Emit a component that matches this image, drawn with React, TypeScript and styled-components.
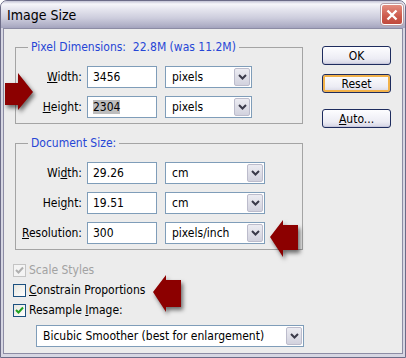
import styled, { createGlobalStyle } from 'styled-components';

const GlobalStyle = createGlobalStyle`
  html, body {
    margin: 0;
    padding: 0;
    background: #ffffff;
  }
  body {
    font-family: "DejaVu Sans Condensed", "DejaVu Sans", sans-serif;
    font-size: 12px;
    color: #000;
  }
`;

const Page = styled.div`
  position: relative;
  width: 406px;
  height: 358px;
`;

const Window = styled.div`
  width: 406px;
  height: 358px;
  box-sizing: border-box;
  border: 1px solid #6c6c88;
  border-radius: 7px 7px 0 0;
  background: #d6d6e2;
  display: flex;
  flex-direction: column;
  overflow: hidden;
`;

const TitleBar = styled.div`
  flex: none;
  height: 27px;
  display: flex;
  align-items: center;
  justify-content: space-between;
  padding: 0 2px 0 6px;
  background: linear-gradient(
    #c4c4d6 0,
    #f6f6fa 3px,
    #e6e6ef 8px,
    #cdcddd 17px,
    #b2b2c8 24px,
    #a4a4be 27px
  );
`;

const Title = styled.span`
  font-size: 14px;
  color: #000;
  padding-top: 1px;
`;

const CloseButton = styled.div`
  width: 22px;
  height: 21px;
  box-sizing: border-box;
  border: 1px solid #fff;
  border-radius: 3px;
  box-shadow: 0 0 0 1px #b8a0a8;
  background: linear-gradient(#e48e80, #cc5a4c 60%, #c04a3e);
  display: flex;
  align-items: center;
  justify-content: center;
`;

const Frame = styled.div`
  flex: 1;
  display: flex;
  padding: 0 2px 3px;
  min-height: 0;
`;

const Client = styled.div`
  flex: 1;
  display: flex;
  align-items: flex-start;
  border: 1px solid #8c8ca4;
  background: #ececec;
  padding: 11px 11px 0 9px;
  gap: 18px;
`;

const LeftColumn = styled.div`
  width: 291px;
  display: flex;
  flex-direction: column;
`;

const Group = styled.fieldset<{ $top?: number }>`
  margin: ${(p) => p.$top ?? 0}px 0 0 2px;
  width: 288px;
  box-sizing: border-box;
  padding: 11px 0 5px 0;
  border: 1px solid #a4a4a4;
  min-width: 0;
`;

const Legend = styled.legend`
  margin-left: 12px;
  padding: 0 3px;
  color: #2646d6;
  font-size: 12px;
  line-height: 15px;
`;

const FieldGrid = styled.div`
  display: grid;
  grid-template-columns: 71px 70px auto;
  row-gap: 8px;
  align-items: center;
`;

const Label = styled.label`
  text-align: right;
  padding-right: 5px;
`;

const TextBox = styled.div`
  height: 22px;
  box-sizing: border-box;
  border: 1px solid #7f9db9;
  background: #fff;
  padding: 0 5px;
  display: flex;
  align-items: center;
`;

const Selected = styled.span`
  background: #bdbdbd;
`;

const Select = styled.div<{ $width: number; $left?: number }>`
  width: ${(p) => p.$width}px;
  margin-left: ${(p) => p.$left ?? 8}px;
  height: 22px;
  box-sizing: border-box;
  border: 1px solid #7f9db9;
  background: #fff;
  padding: 1px 1px 1px 6px;
  display: flex;
  align-items: center;
  justify-content: space-between;
`;

const DropButton = styled.div`
  width: 16px;
  height: 18px;
  box-sizing: border-box;
  border: 1px solid #bcbccc;
  border-radius: 2px;
  background: linear-gradient(#ececf2, #d2d2de);
  display: flex;
  align-items: center;
  justify-content: center;
`;

const CheckList = styled.div`
  margin-top: 10px;
  display: flex;
  flex-direction: column;
`;

const CheckRow = styled.div<{ $disabled?: boolean }>`
  height: 20px;
  display: flex;
  align-items: center;
  gap: 3px;
  color: ${(p) => (p.$disabled ? '#a2a2a2' : '#000')};
`;

const Box = styled.span<{ $disabled?: boolean }>`
  width: 13px;
  height: 13px;
  box-sizing: border-box;
  border: 1px solid ${(p) => (p.$disabled ? '#c4c4c4' : '#1c5180')};
  background: ${(p) => (p.$disabled ? '#f4f4f4' : 'linear-gradient(135deg, #e6e6e0, #fff)')};
  display: flex;
  align-items: center;
  justify-content: center;
`;

const MethodRow = styled.div`
  margin-top: 5px;
`;

const ButtonColumn = styled.div`
  padding-top: 6px;
  display: flex;
  flex-direction: column;
`;

const Button = styled.div<{ $focus?: boolean; $top: number }>`
  margin-top: ${(p) => p.$top}px;
  width: 69px;
  height: 19px;
  box-sizing: border-box;
  border: 1px solid #1e2c5e;
  border-radius: 3px;
  background: linear-gradient(#fdfdff, #ececf4 70%, #d4d4e4);
  box-shadow: ${(p) => (p.$focus ? 'inset 0 0 0 2px #f2b24a' : 'inset 0 -1px 0 #c8c8dc')};
  display: flex;
  align-items: center;
  justify-content: center;
  font-size: 12px;
`;

const ArrowSvg = styled.svg<{ $x: number; $y: number }>`
  position: absolute;
  left: ${(p) => p.$x}px;
  top: ${(p) => p.$y}px;
  filter: drop-shadow(2px 3px 2px rgba(0, 0, 0, 0.55));
  overflow: visible;
`;

function Chevron() {
  return (
    <svg width="9" height="6" viewBox="0 0 9 6">
      <polyline points="1,1 4.5,4.5 8,1" fill="none" stroke="#3a3a4a" strokeWidth="2" />
    </svg>
  );
}

function Dropdown({ value, width, left }: { value: string; width: number; left?: number }) {
  return (
    <Select $width={width} $left={left}>
      <span>{value}</span>
      <DropButton>
        <Chevron />
      </DropButton>
    </Select>
  );
}

function Check({ checked, disabled }: { checked?: boolean; disabled?: boolean }) {
  return (
    <Box $disabled={disabled}>
      {checked && (
        <svg width="9" height="9" viewBox="0 0 9 9">
          <polyline
            points="1,4 3.5,6.5 8,1.5"
            fill="none"
            stroke={disabled ? '#b0b0b0' : '#21a121'}
            strokeWidth="2"
          />
        </svg>
      )}
    </Box>
  );
}

// red annotation arrows drawn over the dialog
function Arrow({
  x,
  y,
  dir,
  bodyTop,
  bodyBottom,
}: {
  x: number;
  y: number;
  dir: 'left' | 'right';
  bodyTop: number;
  bodyBottom: number;
}) {
  const pts =
    dir === 'right'
      ? `0,${bodyTop} 13,${bodyTop} 13,0 28,19 13,37 13,${bodyBottom} 0,${bodyBottom}`
      : `0,17 13,0 13,${bodyTop} 28,${bodyTop} 28,${bodyBottom} 13,${bodyBottom} 13,37`;
  return (
    <ArrowSvg $x={x} $y={y} width="28" height="37" viewBox="0 0 28 37">
      <polygon points={pts} fill="#8c0000" />
    </ArrowSvg>
  );
}

export default function App() {
  return (
    <Page>
      <GlobalStyle />
      <Window>
        <TitleBar>
          <Title>Image Size</Title>
          <CloseButton>
            <svg width="12" height="12" viewBox="0 0 12 12">
              <path d="M1.5 1.5 L10.5 10.5 M10.5 1.5 L1.5 10.5" stroke="#fff" strokeWidth="2.4" />
            </svg>
          </CloseButton>
        </TitleBar>
        <Frame>
          <Client>
            <LeftColumn>
              <Group>
                <Legend>Pixel Dimensions:&nbsp; 22.8M (was 11.2M)</Legend>
                <FieldGrid>
                  <Label>
                    <u>W</u>idth:
                  </Label>
                  <TextBox>3456</TextBox>
                  <Dropdown value="pixels" width={87} />
                  <Label>
                    <u>H</u>eight:
                  </Label>
                  <TextBox>
                    <Selected>2304</Selected>
                  </TextBox>
                  <Dropdown value="pixels" width={87} />
                </FieldGrid>
              </Group>
              <Group $top={12}>
                <Legend>Document Size:</Legend>
                <FieldGrid>
                  <Label>
                    Wi<u>d</u>th:
                  </Label>
                  <TextBox>29.26</TextBox>
                  <Dropdown value="cm" width={100} />
                  <Label>
                    Hei<u>g</u>ht:
                  </Label>
                  <TextBox>19.51</TextBox>
                  <Dropdown value="cm" width={100} />
                  <Label>
                    <u>R</u>esolution:
                  </Label>
                  <TextBox>300</TextBox>
                  <Dropdown value="pixels/inch" width={100} />
                </FieldGrid>
              </Group>
              <CheckList>
                <CheckRow $disabled>
                  <Check checked disabled />
                  Scale Styles
                </CheckRow>
                <CheckRow>
                  <Check />
                  <span>
                    <u>C</u>onstrain Proportions
                  </span>
                </CheckRow>
                <CheckRow>
                  <Check checked />
                  <span>
                    Resample <u>I</u>mage:
                  </span>
                </CheckRow>
              </CheckList>
              <MethodRow>
                <Dropdown value="Bicubic Smoother (best for enlargement)" width={268} left={23} />
              </MethodRow>
            </LeftColumn>
            <ButtonColumn>
              <Button $top={0}>OK</Button>
              <Button $top={9} $focus>
                Reset
              </Button>
              <Button $top={16}>
                <span>
                  <u>A</u>uto...
                </span>
              </Button>
            </ButtonColumn>
          </Client>
        </Frame>
      </Window>
      <Arrow x={5} y={73} dir="right" bodyTop={10} bodyBottom={32} />
      <Arrow x={270} y={220} dir="left" bodyTop={5} bodyBottom={30} />
      <Arrow x={153} y={275} dir="left" bodyTop={5} bodyBottom={32} />
    </Page>
  );
}
